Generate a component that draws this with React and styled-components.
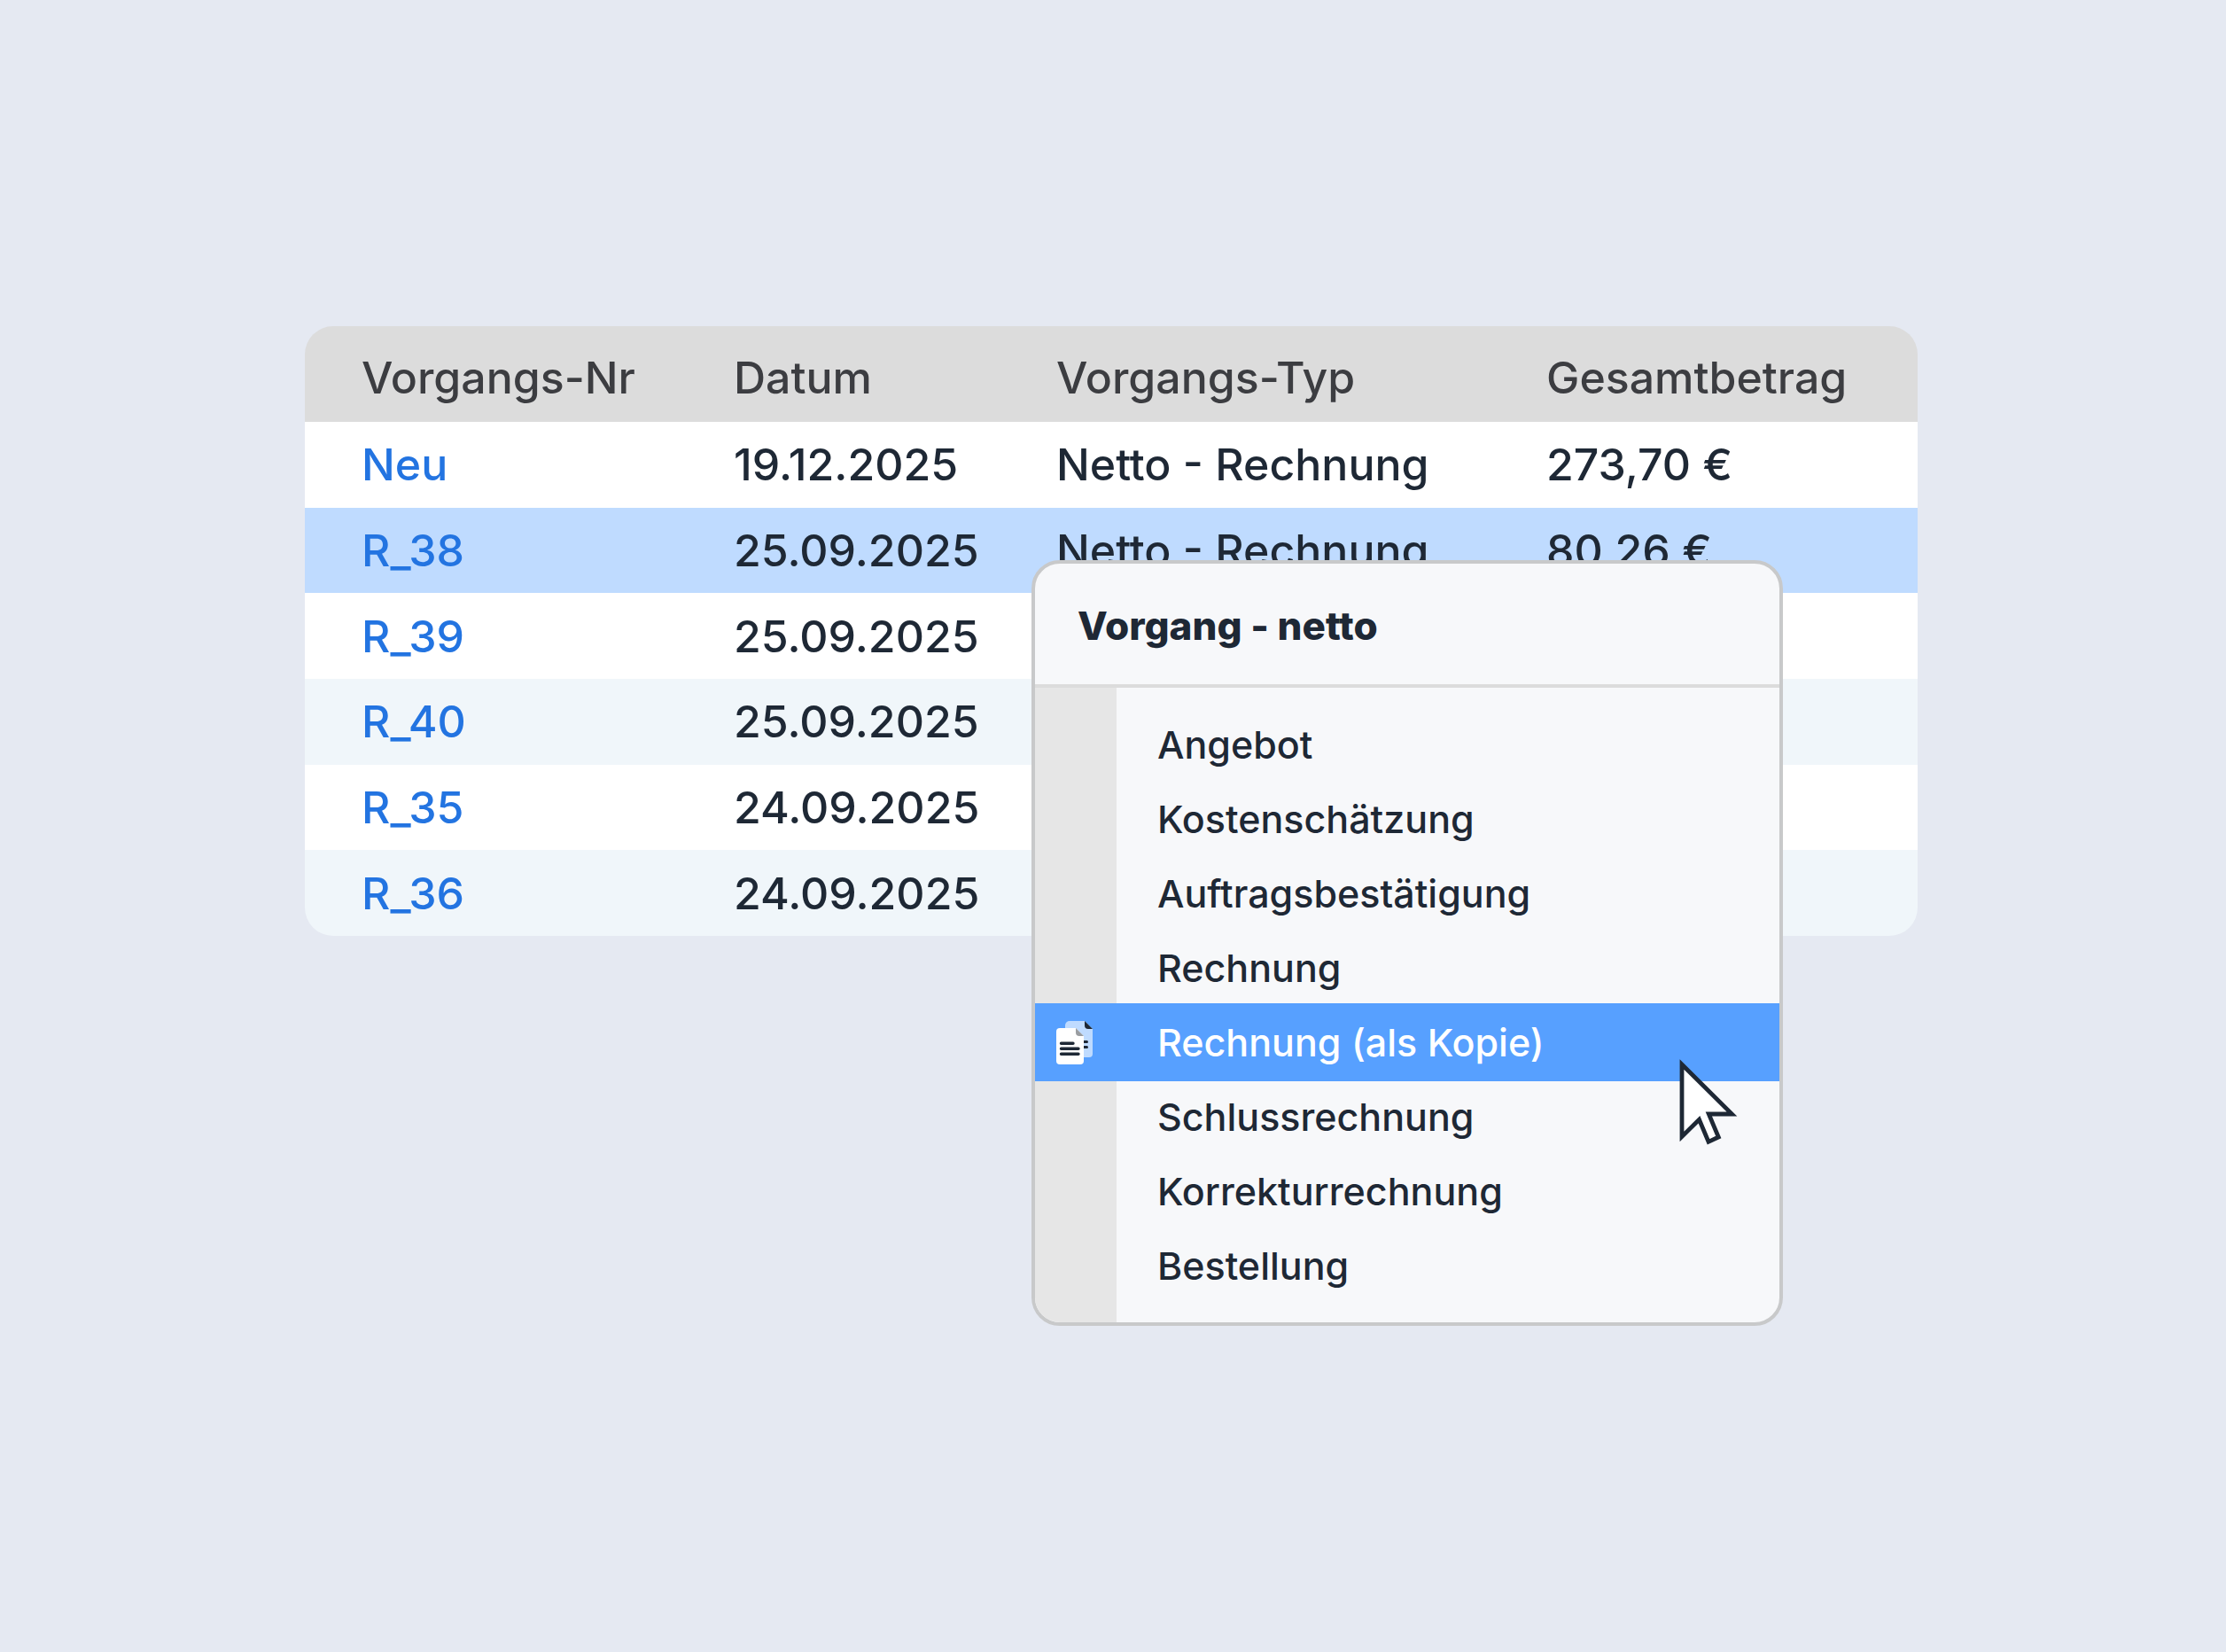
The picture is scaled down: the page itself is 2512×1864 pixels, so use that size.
import React from 'react'
import styled, { createGlobalStyle } from 'styled-components'

const rows = [
  { nr: 'Neu', date: '19.12.2025', type: 'Netto - Rechnung', total: '273,70 €' },
  { nr: 'R_38', date: '25.09.2025', type: 'Netto - Rechnung', total: '80,26 €', selected: true },
  { nr: 'R_39', date: '25.09.2025' },
  { nr: 'R_40', date: '25.09.2025' },
  { nr: 'R_35', date: '24.09.2025' },
  { nr: 'R_36', date: '24.09.2025' },
]

const entries = [
  'Angebot',
  'Kostenschätzung',
  'Auftragsbestätigung',
  'Rechnung',
  'Rechnung (als Kopie)',
  'Schlussrechnung',
  'Korrekturrechnung',
  'Bestellung',
]

const CopyIcon = () => (
  <Icon viewBox="0 -1 42 50" aria-hidden="true">
    <path d="M15 0H32L41 9V37a4 4 0 0 1-4 4H14a4 4 0 0 1-4-4V5a5 5 0 0 1 5-5Z" fill="#bfdbff" />
    <path d="M32 0L41 9H36a4 4 0 0 1-4-4Z" fill="#1e2835" />
    <path d="M27 23.500H34.500M27 29.500H34.500" stroke="#1e2835" strokeWidth="3" strokeLinecap="round" />
    <path d="M4 8H22L31 17V45a4 4 0 0 1-4 4H4a4 4 0 0 1-4-4V12a4 4 0 0 1 4-4Z" fill="#fff" />
    <path d="M22 8L31 17H26a4 4 0 0 1-4-4Z" fill="#9a9da1" />
    <path d="M5.500 25.200H19M5.500 31.200H25M5.500 37.200H25" stroke="#1e2835" strokeWidth="3.400" strokeLinecap="round" />
  </Icon>
)

const App = () => {
  return (
    <>
      <GlobalStyle />
      <Page>
        <Wrapper>
          <Table>
            <colgroup>
              <Col $w={484} />
              <Col $w={364} />
              <Col $w={553} />
              <col />
            </colgroup>
            <thead>
              <tr>
                <Head>Vorgangs-Nr</Head>
                <Head>Datum</Head>
                <Head>Vorgangs-Typ</Head>
                <Head>Gesamtbetrag</Head>
              </tr>
            </thead>
            <Body>
              {rows.map((row) => (
                <Row key={row.nr} $selected={row.selected}>
                  <Cell><NrLink href="#">{row.nr}</NrLink></Cell>
                  <Cell>{row.date}</Cell>
                  <Cell>{row.type}</Cell>
                  <Cell>{row.total}</Cell>
                </Row>
              ))}
            </Body>
          </Table>

          <Menu>
            <MenuTitle>Vorgang - netto</MenuTitle>
            <MenuList>
              {entries.map((entry) => {
                const active = entry === 'Rechnung (als Kopie)'
                return (
                  <li key={entry}>
                    <MenuItem type="button" $active={active}>
                      <IconBox>{active && <CopyIcon />}</IconBox>
                      {entry}
                    </MenuItem>
                  </li>
                )
              })}
            </MenuList>
            <Cursor viewBox="0 0 68 98" aria-hidden="true">
              <path
                d="M4 7V88.500L23.500 69.200L34 94.300L45.300 89L34.300 63H60.500Z"
                fill="#fff"
                stroke="#1e2835"
                strokeWidth="4.800"
                strokeMiterlimit="10"
              />
            </Cursor>
          </Menu>
        </Wrapper>
      </Page>
    </>
  )
}

const GlobalStyle = createGlobalStyle`
  * {
    box-sizing: border-box;
  }
  body {
    margin: 0;
    background: #e5e9f2;
    color: #1e2835;
    font-family: Inter, sans-serif;
    font-weight: 500;
  }
`

const Page = styled.main`
  min-height: 100vh;
  padding: 368px 348px 368px 344px;
`

const Wrapper = styled.div`
  position: relative;
`

const Table = styled.table`
  width: 100%;
  table-layout: fixed;
  border-collapse: separate;
  border-spacing: 0;
  border-radius: 32px;
  overflow: hidden;
  font-size: 50px;
  line-height: 60px;
  text-align: left;
`

const Col = styled.col`
  width: ${(p) => p.$w}px;
`

const Head = styled.th`
  height: 108px;
  padding: 8px 0 0;
  background: #dcdcdc;
  color: #3c3d41;
  font-weight: 500;

  &:first-child {
    padding-left: 64px;
  }
`

const Body = styled.tbody`
  height: 580px;
`

const Row = styled.tr`
  background: ${(p) => (p.$selected ? '#bfdbff' : '#fff')};

  &:nth-child(even) {
    background: ${(p) => (p.$selected ? '#bfdbff' : '#f0f6fa')};
  }
`

const Cell = styled.td`
  padding: 0;
  white-space: nowrap;

  &:first-child {
    padding-left: 64px;
  }
`

const NrLink = styled.a`
  color: #2374e1;
  text-decoration: none;
`

const Menu = styled.div`
  position: absolute;
  top: 264px;
  right: 152px;
  width: 848px;
  background: #f7f8fa;
  border: 4px solid #c8c9ca;
  border-radius: 32px;
  overflow: hidden;
`

const MenuTitle = styled.h2`
  margin: 0;
  padding: 44px 48px 40px;
  border-bottom: 4px solid #dcdcdc;
  font-size: 44px;
  font-weight: 800;
  line-height: 52px;
`

const MenuList = styled.ul`
  margin: 0;
  padding: 22px 0;
  list-style: none;
  background: linear-gradient(to right, #e6e6e6 92px, transparent 92px);
`

const MenuItem = styled.button`
  display: flex;
  align-items: center;
  width: 100%;
  height: ${(p) => (p.$active ? 88 : 84)}px;
  margin: ${(p) => (p.$active ? '-2px 0' : 0)};
  padding: 0;
  border: 0;
  background: ${(p) => (p.$active ? '#57a0ff' : 'transparent')};
  color: ${(p) => (p.$active ? '#fff' : 'inherit')};
  font: inherit;
  font-size: 43px;
  text-align: left;
`

const IconBox = styled.span`
  display: flex;
  width: 138px;
  padding-left: 24px;
`

const Icon = styled.svg`
  width: 42px;
  height: 50px;
`

// mouse pointer resting on the active entry
const Cursor = styled.svg`
  position: absolute;
  top: 558px;
  right: 46px;
  width: 68px;
  height: 98px;
`

export default App
